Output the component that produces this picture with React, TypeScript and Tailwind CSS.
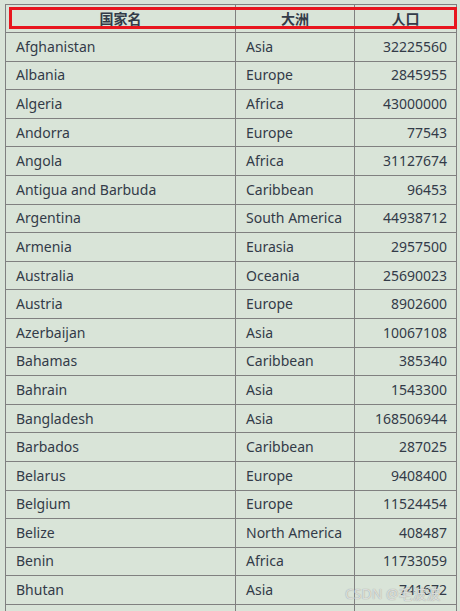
const rows: [string, string, number][] = [
  ['Afghanistan', 'Asia', 32225560],
  ['Albania', 'Europe', 2845955],
  ['Algeria', 'Africa', 43000000],
  ['Andorra', 'Europe', 77543],
  ['Angola', 'Africa', 31127674],
  ['Antigua and Barbuda', 'Caribbean', 96453],
  ['Argentina', 'South America', 44938712],
  ['Armenia', 'Eurasia', 2957500],
  ['Australia', 'Oceania', 25690023],
  ['Austria', 'Europe', 8902600],
  ['Azerbaijan', 'Asia', 10067108],
  ['Bahamas', 'Caribbean', 385340],
  ['Bahrain', 'Asia', 1543300],
  ['Bangladesh', 'Asia', 168506944],
  ['Barbados', 'Caribbean', 287025],
  ['Belarus', 'Europe', 9408400],
  ['Belgium', 'Europe', 11524454],
  ['Belize', 'North America', 408487],
  ['Benin', 'Africa', 11733059],
  ['Bhutan', 'Asia', 741672],
  ['Bolivia', 'South America', 11633371],
];

export default function App() {
  return (
    <div
      className="relative w-[460px] h-[611px] overflow-hidden bg-[#d9e4d8] text-[#333b48]"
      style={{ fontFamily: '"Noto Sans", "Noto Sans CJK SC", sans-serif' }}
    >
      <div className="pl-[5px] pt-[4px]">
        <table className="border-collapse text-[14px] leading-none">
          <thead>
            <tr className="h-[28px]">
              <th className="w-[230px] border border-[#808080] font-bold text-center">国家名</th>
              <th className="w-[119px] border border-[#808080] font-bold text-center">大洲</th>
              <th className="w-[102px] border border-[#808080] font-bold text-center">人口</th>
            </tr>
          </thead>
          <tbody>
            {rows.map(([name, continent, pop]) => (
              <tr key={name} className="h-[28.6px]">
                <td className="border border-[#808080] pl-[10px]">{name}</td>
                <td className="border border-[#808080] pl-[10px]">{continent}</td>
                <td className="border border-[#808080] pr-[9px] text-right">{pop}</td>
              </tr>
            ))}
          </tbody>
        </table>
      </div>

      {/* annotation box over header */}
      <div className="absolute left-[9px] top-[7px] w-[448px] h-[22px] border-[3px] border-[#e8161e]" />

      {/* watermark */}
      <div className="absolute left-[345px] top-[583px] text-[14px] text-[#eef0ee]/80 [text-shadow:0_0_1px_#888]">
        CSDN @毛波波
      </div>
    </div>
  );
}
